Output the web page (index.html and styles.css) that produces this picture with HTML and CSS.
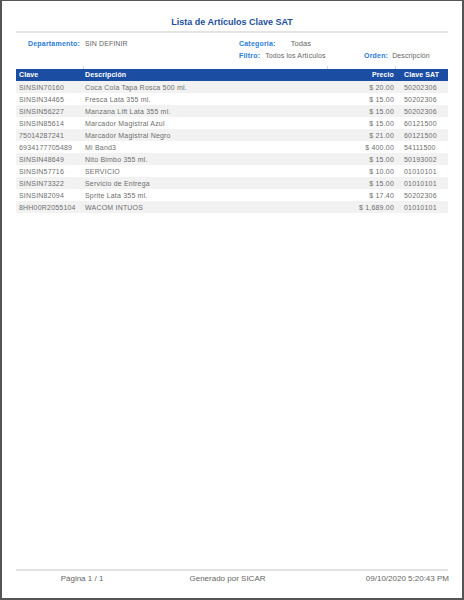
FILE: index.html
```html
<!DOCTYPE html>
<html lang="es">
<head>
<meta charset="utf-8">
<title>Lista de Artículos Clave SAT</title>
<link rel="stylesheet" href="styles.css">
</head>
<body>
<div class="page">
  <h1 class="title">Lista de Artículos Clave SAT</h1>
  <div class="rule"></div>
  <div class="info">
    <div class="field f-dep"><span class="label">Departamento:</span><span class="value">SIN DEFINIR</span></div>
    <div class="field f-cat"><span class="label">Categoria:</span><span class="value value-big">Todas</span></div>
    <div class="field f-fil"><span class="label">Filtro:</span><span class="value">Todos los Artículos</span></div>
    <div class="field f-ord"><span class="label">Orden:</span><span class="value">Descripción</span></div>
  </div>
  <div class="table">
    <div class="ticks"><span></span><span></span><span></span><span></span></div>
    <div class="row head"><span class="c1">Clave</span><span class="c2">Descripción</span><span class="c3">Precio</span><span class="c4">Clave SAT</span></div>
    <div class="row"><span class="c1">SINSIN70160</span><span class="c2">Coca Cola Tapa Rosca 500 ml.</span><span class="c3">$ 20.00</span><span class="c4">50202306</span></div>
    <div class="row"><span class="c1">SINSIN34465</span><span class="c2">Fresca Lata 355 ml.</span><span class="c3">$ 15.00</span><span class="c4">50202306</span></div>
    <div class="row"><span class="c1">SINSIN56227</span><span class="c2">Manzana Lift Lata 355 ml.</span><span class="c3">$ 15.00</span><span class="c4">50202306</span></div>
    <div class="row"><span class="c1">SINSIN85614</span><span class="c2">Marcador Magistral Azul</span><span class="c3">$ 15.00</span><span class="c4">60121500</span></div>
    <div class="row"><span class="c1">75014287241</span><span class="c2">Marcador Magistral Negro</span><span class="c3">$ 21.00</span><span class="c4">60121500</span></div>
    <div class="row"><span class="c1">6934177705489</span><span class="c2">Mi Band3</span><span class="c3">$ 400.00</span><span class="c4">54111500</span></div>
    <div class="row"><span class="c1">SINSIN48649</span><span class="c2">Nito Bimbo 355 ml.</span><span class="c3">$ 15.00</span><span class="c4">50193002</span></div>
    <div class="row"><span class="c1">SINSIN57716</span><span class="c2">SERVICIO</span><span class="c3">$ 10.00</span><span class="c4">01010101</span></div>
    <div class="row"><span class="c1">SINSIN73322</span><span class="c2">Servicio de Entrega</span><span class="c3">$ 15.00</span><span class="c4">01010101</span></div>
    <div class="row"><span class="c1">SINSIN82094</span><span class="c2">Sprite Lata 355 ml.</span><span class="c3">$ 17.40</span><span class="c4">50202306</span></div>
    <div class="row"><span class="c1">8HH00R2055104</span><span class="c2">WACOM INTUOS</span><span class="c3">$ 1,689.00</span><span class="c4">01010101</span></div>
  </div>
  <footer class="footer">
    <div class="rule"></div>
    <div class="foot-row">
      <span class="f-page">Página 1 / 1</span>
      <span class="f-gen">Generado por SICAR</span>
      <span class="f-date">09/10/2020 5:20:43 PM</span>
    </div>
  </footer>
</div>
</body>
</html>
```
FILE: styles.css
```css
* { box-sizing: border-box; }
html, body { margin: 0; padding: 0; background: #fff; }
body { font-family: "Liberation Sans", Arial, sans-serif; color: #666; }

.page {
  width: 464px;
  height: 600px;
  border: 2px solid #555;
  border-top-width: 1px;
  padding: 15px 14px 0 14px;
  display: flex;
  flex-direction: column;
}

.title {
  margin: 0;
  font-size: 9px;
  line-height: 12px;
  font-weight: bold;
  text-align: center;
  color: #1d4f9e;
}

.rule {
  height: 2px;
  background: #e3e3e3;
  margin-top: 3px;
}

.info {
  margin-top: 5px;
  padding-left: 12px;
  display: grid;
  grid-template-columns: 211px 125px 1fr;
  grid-auto-rows: 12px;
  font-size: 7px;
  line-height: 12px;
}
.field { display: flex; gap: 5px; white-space: nowrap; }
.label { color: #2a7cd8; font-weight: bold; letter-spacing: 0.2px; }
.value { color: #666; letter-spacing: 0.1px; }
.value-big { font-size: 7.5px; margin-left: 10px; }
.f-dep { grid-column: 1; grid-row: 1; }
.f-cat { grid-column: 2; grid-row: 1; }
.f-fil { grid-column: 2; grid-row: 2; }
.f-ord { grid-column: 3; grid-row: 2; gap: 4px; }

.table { margin-top: 4px; }
.ticks, .row {
  display: grid;
  grid-template-columns: 67px 244px 68px 53px;
}
.ticks { height: 3px; }
.ticks span + span { border-left: 1px solid #d6d6d6; }

.row {
  height: 12px;
  font-size: 7px;
  line-height: 13px;
  letter-spacing: 0.2px;
  color: #6e6e6e;
  white-space: nowrap;
}
.row:nth-child(odd) { background: #f2f2f2; }
.row.head {
  background: #1b4ea2;
  color: #fff;
  font-weight: bold;
  letter-spacing: 0.1px;
  line-height: 12px;
}
.c1 { padding-left: 3px; }
.c2 { padding-left: 2px; }
.c3 { text-align: right; padding-right: 1px; }
.c4 { padding-left: 9px; }

.footer { margin-top: auto; padding-bottom: 13px; }
.footer .rule { margin-top: 0; }
.foot-row {
  display: grid;
  grid-template-columns: 132px 159px 1fr;
  margin-top: 2px;
  font-size: 8px;
  line-height: 12px;
  color: #666;
  white-space: nowrap;
}
.f-page { text-align: center; }
.f-gen { text-align: center; }
.f-date { text-align: right; margin-right: -1px; }
```
